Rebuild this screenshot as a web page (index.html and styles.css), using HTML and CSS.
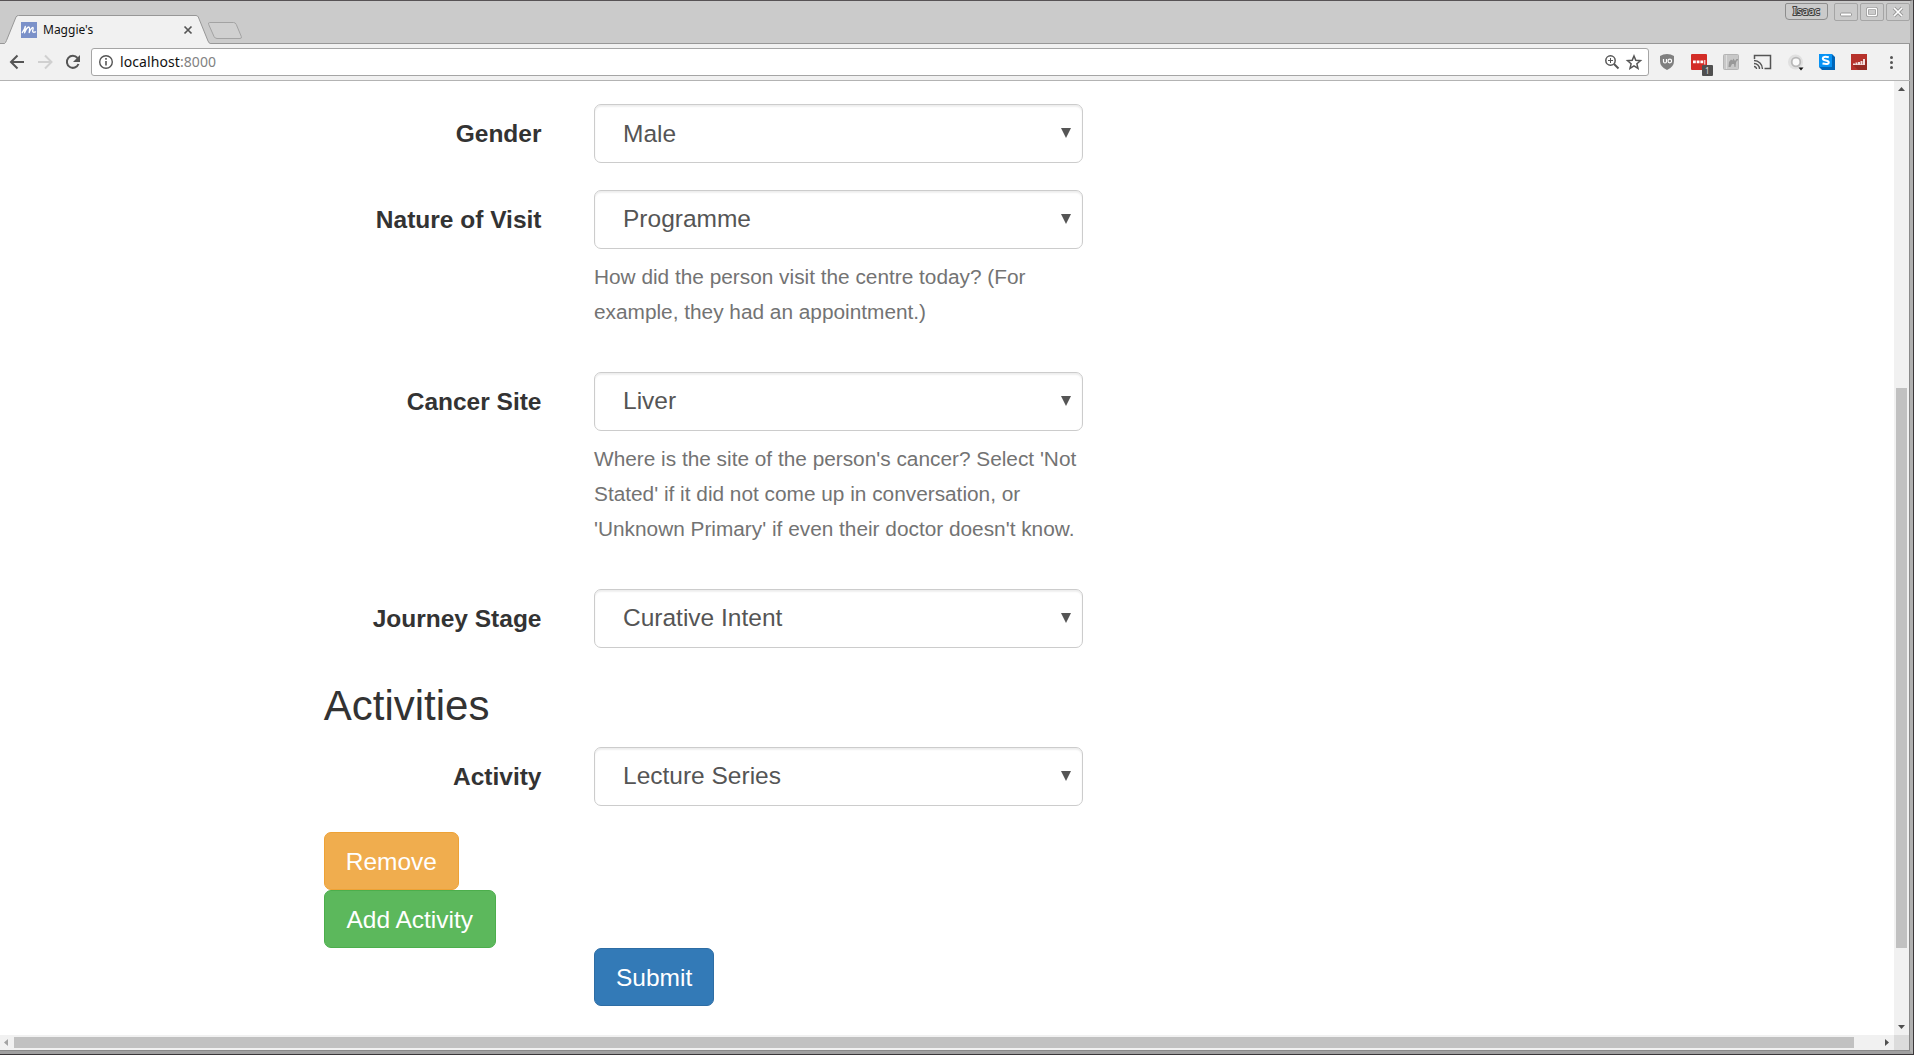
FILE: index.html
```html
<!DOCTYPE html>
<html lang="en">
<head>
<meta charset="utf-8">
<title>Maggie's</title>
<link rel="stylesheet" href="styles.css">
</head>
<body>
<div class="window">
  <header class="titlebar">
    <svg class="tabs" width="260" height="29" viewBox="0 0 260 29">
      <path d="M0 28.5H4.500Q5.500 28 6.500 25.500L16 2Q16.800 .5 18.500 .5H196Q197.500 .5 198.300 2L208 26Q209 28.500 210.500 28.500V29H0Z" fill="#f1f1f1"/>
      <path d="M0 28.500H4.500Q5.500 28 6.500 25.500L16 2Q16.800 .5 18.500 .5H196Q197.500 .5 198.300 2L208 26Q209 28.500 210.500 28.500H260" fill="none" stroke="#979797"/>
      <path d="M209.500 7.500H233.500Q235.500 7.500 236.300 9.500L241.300 21.500Q242 23.500 240 23.500H217Q215 23.500 214 21.500L208.700 9.500Q208 7.500 209.500 7.500Z" fill="#d0d0d0" stroke="#a3a3a3"/>
      <rect x="21" y="7" width="16" height="16" fill="#7b91c9"/>
      <path d="M22.300 17.500Q24.500 15 25.300 11.500L24.600 17.800Q26.500 12.500 29 12Q30 12.500 29.200 17.500Q31 12.800 33 12.300Q33.600 13 32.600 16Q32.600 18 35.500 16.800" fill="none" stroke="#fff" stroke-width="1.300" stroke-linejoin="round" stroke-linecap="round"/>
      <path d="M184.500 11.500l7 7m0-7l-7 7" stroke="#555" stroke-width="1.700" fill="none"/>
    </svg>
    <span class="tab-title">Maggie's</span>
    <div class="window-controls">
      <span class="profile">Isaac</span>
      <span class="control"><svg width="22" height="16"><rect x="5.500" y="9" width="11" height="3" rx="1" fill="#fff" stroke="#999"/></svg></span>
      <span class="control"><svg width="22" height="16"><rect x="6.500" y="4.500" width="9" height="7" rx="1" fill="none" stroke="#999" stroke-width="3"/><rect x="6.500" y="4.500" width="9" height="7" rx="1" fill="none" stroke="#fff" stroke-width="1.300"/></svg></span>
      <span class="control"><svg width="22" height="16"><path d="M7 4l8 8m0-8l-8 8" stroke="#999" stroke-width="3.500"/><path d="M7 4l8 8m0-8l-8 8" stroke="#fff" stroke-width="1.700"/></svg></span>
    </div>
  </header>
  <div class="toolbar">
    <svg class="nav" width="91" height="36" viewBox="0 44 91 36">
      <path d="M24 62H11.500M17.500 55.500L11 62l6.500 6.500" fill="none" stroke="#555" stroke-width="2"/>
      <path d="M38 62h12.500M45 55.500l6.500 6.500-6.500 6.500" fill="none" stroke="#d0d0d0" stroke-width="2"/>
      <path d="M77.500 58A6 6 0 1 0 78.500 64" fill="none" stroke="#555" stroke-width="2"/><path d="M80 55v7h-7z" fill="#555"/>
    </svg>
    <div class="address">
      <svg width="18" height="18" viewBox="0 0 18 18"><circle cx="9" cy="9" r="6.300" fill="none" stroke="#555" stroke-width="1.400"/><path d="M9 8v4.500M9 5v1.800" stroke="#555" stroke-width="1.600"/></svg>
      <span class="url">localhost<span class="port">:8000</span></span>
      <svg class="address-actions" width="40" height="18" viewBox="1604 53 40 18">
        <circle cx="1610.500" cy="60.500" r="4.700" fill="none" stroke="#555" stroke-width="1.500"/><path d="M1614 64l4.500 4.500" stroke="#555" stroke-width="2"/><path d="M1608 60.500h5M1610.500 58v5" stroke="#555"/>
        <path d="M1634 56l1.800 4.300 4.700.4-3.600 3.100 1.100 4.600-4-2.500-4 2.500 1.100-4.600-3.600-3.100 4.700-.4z" fill="none" stroke="#555" stroke-width="1.500"/>
      </svg>
    </div>
    <svg class="extensions" width="261" height="36" viewBox="1649 44 261 36">
      <path d="M1667 54q4 0 7 2v5q0 6-7 9q-7-3-7-9v-5q3-2 7-2z" fill="#808080"/>
      <path d="M1663.500 59v2.500q0 1.500 1.500 1.500t1.500-1.500V59" fill="none" stroke="#fff" stroke-width="1.200"/><circle cx="1669.800" cy="61" r="1.800" fill="none" stroke="#fff" stroke-width="1.200"/>
      <rect x="1691" y="54" width="16" height="16" rx="1" fill="#d32d27"/><path d="M1693 60.500h2.800v2.800H1693zM1696.700 60.500h2.800v2.800h-2.800zM1700.400 60.500h2.800v2.800h-2.800zM1704.300 60h1v4.500h-1z" fill="#fff"/>
      <rect x="1702" y="65" width="11" height="11" rx="1" fill="#505050"/><text x="1705" y="74" class="badge-count">1</text>
      <rect x="1723.500" y="54.500" width="15" height="15" rx="1" fill="#c8c8c8" stroke="#b5b5b5"/><path d="M1726.500 55v14" stroke="#dedede"/><path d="M1728.500 67l.5-5 2-2.500 1.500 1 1-2 1.500 2.500 1.500-2h1.500v1.500h-1l-1 2-.5 4.500h-1l-.5-3h-2l-1.500 3z" fill="#989898"/>
      <path d="M1754.500 59v-3.500h16v13h-6" fill="none" stroke="#555" stroke-width="1.500"/><path d="M1754 66.500a2.500 2.500 0 0 1 2.500 2.500M1754 63.500a5.500 5.500 0 0 1 5.500 5.500M1754 60.500a8.500 8.500 0 0 1 8.500 8.500" fill="none" stroke="#555" stroke-width="1.400"/>
      <circle cx="1795.500" cy="62" r="7.500" fill="#e0e0e0"/><circle cx="1796" cy="62" r="4.300" fill="#fafafa" stroke="#b8b8b8" stroke-width="1.800"/><path d="M1798.500 67.500h5l-2.500 3z" fill="#111"/>
      <path d="M1819 54h13l3 3v13h-13l-3-3z" fill="#0065b8"/><rect x="1819" y="54" width="13" height="13" fill="#0793f5"/><path d="M1828.800 57.300q-6-1.300-6 1.200 0 1.500 3 1.900t3 2q0 2.500-6.300 1.200" fill="none" stroke="#fff" stroke-width="2"/>
      <rect x="1851" y="54" width="16" height="16" fill="#b7322b"/><path d="M1853 65l12-6 2 2v9h-9z" fill="#962a23"/><path d="M1853 65v-1.500h2V65zM1855.500 65v-2.500h2V65zM1858 65v-3h2v3zM1860.500 65v-4h2v4zM1863 65v-6h2v6zM1853 64.300h12V65h-12z" fill="#f4dedd"/>
      <circle cx="1891.500" cy="57.500" r="1.500" fill="#555"/><circle cx="1891.500" cy="62.500" r="1.500" fill="#555"/><circle cx="1891.500" cy="67.500" r="1.500" fill="#555"/>
    </svg>
  </div>
  <div class="viewport">
    <main class="page">
      <form class="form">
        <div class="form-group">
          <label class="control-label" for="gender">Gender</label>
          <div class="field">
            <div class="select-wrap"><select class="form-control form-control-first" id="gender"><option>Male</option></select><svg class="caret" width="10" height="10"><path d="M0 0h10L5 10z"/></svg></div>
          </div>
        </div>
        <div class="form-group">
          <label class="control-label" for="nature">Nature of Visit</label>
          <div class="field">
            <div class="select-wrap"><select class="form-control" id="nature"><option>Programme</option></select><svg class="caret" width="10" height="10"><path d="M0 0h10L5 10z"/></svg></div>
            <p class="help">How did the person visit the centre today? (For example, they had an appointment.)</p>
          </div>
        </div>
        <div class="form-group">
          <label class="control-label" for="site">Cancer Site</label>
          <div class="field">
            <div class="select-wrap"><select class="form-control" id="site"><option>Liver</option></select><svg class="caret" width="10" height="10"><path d="M0 0h10L5 10z"/></svg></div>
            <p class="help">Where is the site of the person's cancer? Select 'Not Stated' if it did not come up in conversation, or 'Unknown Primary' if even their doctor doesn't know.</p>
          </div>
        </div>
        <div class="form-group">
          <label class="control-label" for="stage">Journey Stage</label>
          <div class="field">
            <div class="select-wrap"><select class="form-control" id="stage"><option>Curative Intent</option></select><svg class="caret" width="10" height="10"><path d="M0 0h10L5 10z"/></svg></div>
          </div>
        </div>
        <h3 class="section-title">Activities</h3>
        <div class="form-group">
          <label class="control-label" for="activity">Activity</label>
          <div class="field">
            <div class="select-wrap"><select class="form-control" id="activity"><option>Lecture Series</option></select><svg class="caret" width="10" height="10"><path d="M0 0h10L5 10z"/></svg></div>
          </div>
        </div>
        <div class="actions">
          <button type="button" class="btn btn-warning">Remove</button>
          <button type="button" class="btn btn-success">Add Activity</button>
          <button type="button" class="btn btn-primary">Submit</button>
        </div>
      </form>
    </main>
    <div class="scroll-y">
      <svg width="15" height="15"><path d="M4 10h7L7.500 6z" fill="#505050"/></svg>
      <div class="thumb-y"></div>
      <svg class="down" width="15" height="15"><path d="M4 5h7L7.500 9z" fill="#505050"/></svg>
    </div>
    <div class="scroll-x">
      <svg width="14" height="15"><path d="M8 4v7L4 7.500z" fill="#a3a3a3"/></svg>
      <div class="thumb-x"></div>
      <svg class="right" width="15" height="15"><path d="M6 4v7l4-3.500z" fill="#505050"/></svg>
    </div>
    <div class="corner"></div>
  </div>
</div>
</body>
</html>
```
FILE: styles.css
```css
* { box-sizing: border-box; }
body { margin: 0; overflow: hidden; background: #3a3739; }
svg { display: block; flex: none; }

/* Window frame */
.window {
  display: flex;
  flex-direction: column;
  width: 1913px;
  height: 1054px;
  border-top: 1px solid #575355;
  border-right: 3px solid #b0b0b0;
  border-bottom: 3px solid #a0a0a0;
  box-shadow: inset -1px -1px #8a8a8a;
  background: #f1f1f1;
  font-family: "Noto Sans", sans-serif;
}
.titlebar {
  display: flex;
  align-items: flex-end;
  height: 43px;
  background: #cbcbcb;
  flex: none;
  box-shadow: inset 0 -1px #979797;
}
.tab-title {
  margin-left: -217px;
  height: 29px;
  font-size: 12px;
  line-height: 29px;
  color: #111;
  z-index: 1;
}
.window-controls {
  display: flex;
  align-self: flex-start;
  margin-left: auto;
  padding-top: 2px;
  gap: 2px;
}
.profile {
  width: 43px;
  height: 17px;
  margin-right: 4px;
  border: 1px solid #8d8d8d;
  border-radius: 2px 2px 4px 4px;
  color: #d8d8d8;
  font-size: 10.500px;
  line-height: 15px;
  text-align: center;
  letter-spacing: .3px;
  -webkit-text-stroke: 2px #444;
  paint-order: stroke fill;
}
.control {
  width: 24px;
  height: 18px;
  border: 1px solid #a5a5a5;
  border-radius: 2px;
  display: flex;
  justify-content: center;
}

/* Toolbar */
.toolbar {
  display: flex;
  align-items: center;
  height: 37px;
  flex: none;
  border-bottom: 1px solid #b3b3b3;
}
.address {
  display: flex;
  align-items: center;
  width: 1558px;
  height: 28px;
  padding-left: 5px;
  background: #fff;
  border: 1px solid #a5a5a5;
  border-radius: 3px;
}
.url { margin-left: 5px; padding-bottom: 2px; font-size: 14px; letter-spacing: .08px; color: #111; }
.port { color: #828282; }
.address-actions { margin-left: auto; margin-right: 4px; }
.badge-count { font-size: 8px; fill: #dcdcdc; }

/* Content area with its scrollbars */
.viewport {
  display: grid;
  grid-template-columns: 1894px 15px;
  grid-template-rows: 954px 15px;
}
.page {
  overflow: hidden;
  padding: 22.750px 0 0 323.750px;
  background: #fff;
  color: #333;
  font-family: "Liberation Sans", Arial, sans-serif;
  font-size: 24.5px;
  line-height: 35px;
}
.scroll-y, .scroll-x { display: flex; background: #f1f1f1; }
.scroll-y { grid-column: 2; grid-row: 1; flex-direction: column; }
.scroll-x { grid-column: 1; grid-row: 2; }
.thumb-y { width: 11px; height: 560px; margin: 292px 0 0 2px; background: #c1c1c1; }
.thumb-x { width: 1840px; height: 11px; margin-top: 2px; background: #c1c1c1; }
.down { margin-top: auto; }
.right { margin-left: auto; }
.corner { background: #dcdcdc; }

/* Form */
.form { width: 759px; }
.form-group {
  display: grid;
  grid-template-columns: 217.750px 489px;
  column-gap: 52.500px;
  margin-bottom: 26.250px;
}
.control-label { padding-top: 12.500px; text-align: right; font-weight: 700; }
.select-wrap { display: grid; height: 59.500px; }
.form-control {
  grid-area: 1 / 1;
  width: 489px;
  height: 59px;
  padding: 0 28px 1px;
  appearance: none;
  border: 1px solid #ccc;
  border-radius: 7px;
  background: #fff;
  color: #555;
  font: inherit;
  box-shadow: inset 0 1.750px 1.750px rgba(0, 0, 0, .075);
}
.form-control-first { padding: 1px 28px 0; }
.caret { grid-area: 1 / 1; justify-self: end; margin: 24px 12px 0 0; fill: #555; }
.help { margin: 9.500px 0 16.750px; color: #737373; font-size: 20.825px; }
.section-title {
  margin: 35px 0 17.500px;
  font-size: 42px;
  font-weight: 500;
  line-height: 46.200px;
}
.actions { display: flex; flex-direction: column; align-items: flex-start; margin-top: -.5px; }
.btn {
  height: 58px;
  padding: 1px 21px 0;
  border: 1px solid;
  border-radius: 7px;
  color: #fff;
  font: inherit;
}
.btn-warning { background: #f0ad4e; border-color: #eea236; }
.btn-success { width: 172px; background: #5cb85c; border-color: #4cae4c; }
.btn-primary { margin-left: 270.250px; background: #337ab7; border-color: #2e6da4; }
```
